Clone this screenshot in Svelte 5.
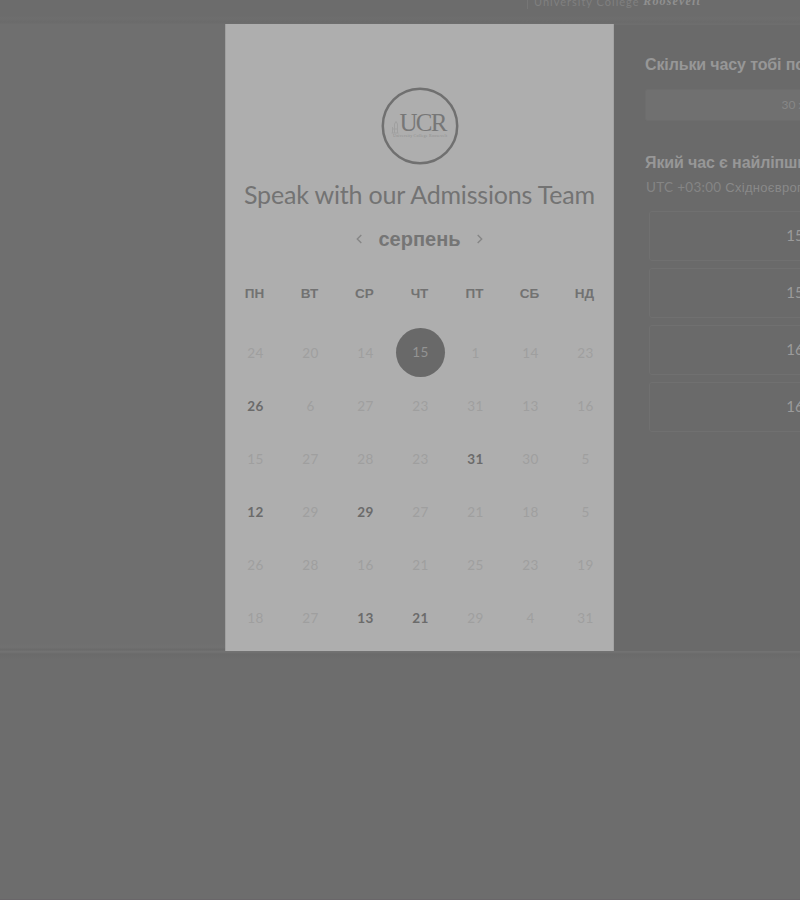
<script>
  const weekdays = ['ПН', 'ВТ', 'СР', 'ЧТ', 'ПТ', 'СБ', 'НД'];
  const weeks = [
    [24, 20, 14, 15, 1, 14, 23],
    [26, 6, 27, 23, 31, 13, 16],
    [15, 27, 28, 23, 31, 30, 5],
    [12, 29, 29, 27, 21, 18, 5],
    [26, 28, 16, 21, 25, 23, 19],
    [18, 27, 13, 21, 29, 4, 31],
  ];
  const available = new Set(['1-0', '2-4', '3-0', '3-2', '5-2', '5-3']);
  const slots = ['15:00', '15:30', '16:00', '16:30'];
</script>

<div class="page">
  <header>
    <span class="brand"><i class="bar"></i>University College <b>Roosevelt</b></span>
  </header>
  <main>
    <div class="side"></div>
    <section class="calendar">
      <svg class="logo" width="78" height="78" viewBox="0 0 78 78">
        <circle cx="39" cy="39" r="37.2" fill="none" stroke="#707070" stroke-width="2.5" />
        <path d="M11.5 46V40M13.5 46V37L15 34.5L16.5 37V46M10.5 46H17.5M11.5 42H17" fill="none" stroke="#a0a0a0" stroke-width="1" />
        <text class="ucr" x="18.5" y="44" textLength="48">UCR</text>
        <text class="sub" x="12" y="49.5" textLength="54">University College Roosevelt</text>
      </svg>
      <h1>Speak with our Admissions Team</h1>
      <div class="month">
        <svg width="8" height="10" viewBox="0 0 8 10"><path d="M6.3 1L2.3 5L6.3 9" /></svg>
        <h2>серпень</h2>
        <svg width="8" height="10" viewBox="0 0 8 10"><path d="M1.7 1L5.7 5L1.7 9" /></svg>
      </div>
      <div class="grid names">
        {#each weekdays as name}<span>{name}</span>{/each}
      </div>
      <div class="grid days">
        {#each weeks as week, r}
          {#each week as day, c}
            <span class:available={available.has(`${r}-${c}`)} class:selected={r === 0 && c === 3}>{day}</span>
          {/each}
        {/each}
      </div>
    </section>
    <section class="times">
      <h3>Скільки часу тобі потрібно?</h3>
      <div class="duration">30 хв</div>
      <h3 class="second">Який час є найліпшим?</h3>
      <p>UTC +03:00 <span>Східноєвропейський час</span></p>
      <div class="slots">
        {#each slots as slot}<div class="slot">{slot}</div>{/each}
      </div>
    </section>
  </main>
  <footer></footer>
</div>

<style>
  .page {
    width: 800px;
    height: 900px;
    overflow: hidden;
    display: flex;
    flex-direction: column;
    background: #6d6d6d;
    font-family: Lato, "Liberation Sans", sans-serif;
  }
  header {
    height: 24px;
    flex: none;
    overflow: hidden;
    background: linear-gradient(#6c6c6c 0 16px, #6e6e6e 18px, #6b6b6b 22px, #6e6e6e 24px);
  }
  .brand {
    display: flex;
    margin: -6px 0 0 527px;
    align-items: center;
    font-size: 11px;
    line-height: 15px;
    letter-spacing: 1px;
    color: #808080;
    white-space: pre;
  }
  .bar {
    width: 1px;
    height: 14px;
    margin-right: 6px;
    background: #767676;
  }
  .brand b {
    font: italic bold 12px/15px "Liberation Serif", serif;
    letter-spacing: 1.15px;
    color: #909090;
  }
  main {
    display: flex;
    height: 627px;
    flex: none;
  }
  .side {
    width: 225px;
    flex: none;
    background: linear-gradient(#6f6f6f, #6f6f6f 620px, #717171 623px, #6a6a6a 626px, #717171 627px);
  }
  .calendar {
    width: 389px;
    flex: none;
    box-sizing: border-box;
    border-left: 1px solid #9f9f9f;
    border-right: 1px solid #a3a3a3;
    background: #aeaeae;
    display: flex;
    flex-direction: column;
    align-items: center;
    padding-top: 63px;
  }
  .logo {
    display: block;
    flex: none;
  }
  .ucr {
    font: 25px "Liberation Serif", serif;
    fill: #777;
  }
  .sub {
    font: 4px "Liberation Serif", serif;
    fill: #909090;
  }
  h1 {
    margin: 13px 0 0;
    font-size: 25px;
    line-height: 32px;
    font-weight: 400;
    letter-spacing: -0.17px;
    color: #737373;
    white-space: nowrap;
  }
  .month {
    display: flex;
    align-items: center;
    gap: 15px;
    height: 30px;
    margin-top: 14px;
  }
  .month svg {
    fill: none;
    stroke: #868686;
    stroke-width: 1.4;
  }
  h2 {
    margin: 0;
    font: bold 20px/26px "Liberation Sans", sans-serif;
    color: #757575;
  }
  .grid {
    display: grid;
    grid-template-columns: repeat(7, 55px);
    justify-items: center;
    align-items: center;
  }
  .names {
    height: 20px;
    margin-top: 30px;
    font: bold 13.5px/20px "Liberation Sans", sans-serif;
    color: #727272;
  }
  .days {
    grid-auto-rows: 53px;
    margin: 22px 0 0 2px;
    font-size: 13.5px;
    color: #9f9f9f;
  }
  .days span {
    letter-spacing: 0.3px;
  }
  .days .available {
    color: #6b6b6b;
    font-weight: 700;
  }
  .days .selected {
    width: 49px;
    height: 49px;
    border-radius: 50%;
    background: #696969;
    color: #939393;
    line-height: 48px;
    text-align: center;
  }
  .times {
    width: 186px;
    box-sizing: border-box;
    padding: 30px 0 0 31px;
    overflow: hidden;
    background: #6a6a6a;
    border-top: 1px solid #6e6e6e;
  }
  h3 {
    margin: 0;
    font: bold 16px/20px "Liberation Sans", sans-serif;
    letter-spacing: -0.12px;
    color: #979797;
    white-space: nowrap;
  }
  .second {
    margin-top: 32px;
  }
  .duration {
    width: 302px;
    height: 32px;
    margin-top: 14px;
    box-sizing: border-box;
    border: 1px solid #6d6d6d;
    border-radius: 2px;
    background: #707070;
    color: #878787;
    font-size: 12px;
    line-height: 30px;
    text-align: center;
  }
  p {
    margin: 5px 0 0 1px;
    font-size: 13.5px;
    line-height: 18px;
    letter-spacing: 0.3px;
    color: #858585;
    white-space: nowrap;
  }
  p span {
    font-family: "Liberation Sans", sans-serif;
    font-size: 13px;
    color: #898989;
  }
  .slots {
    display: flex;
    flex-direction: column;
    gap: 7px;
    margin: 14px 0 0 4px;
  }
  .slot {
    width: 313px;
    height: 50px;
    box-sizing: border-box;
    border: 1px solid #707070;
    border-radius: 3px;
    font-size: 15px;
    line-height: 47px;
    text-align: center;
    color: #9b9b9b;
  }
  footer {
    flex: 1;
    background: linear-gradient(#727272 0 1px, #6a6a6a 3px, #6d6d6d 8px);
    border-bottom: 1px solid #696669;
  }
</style>
